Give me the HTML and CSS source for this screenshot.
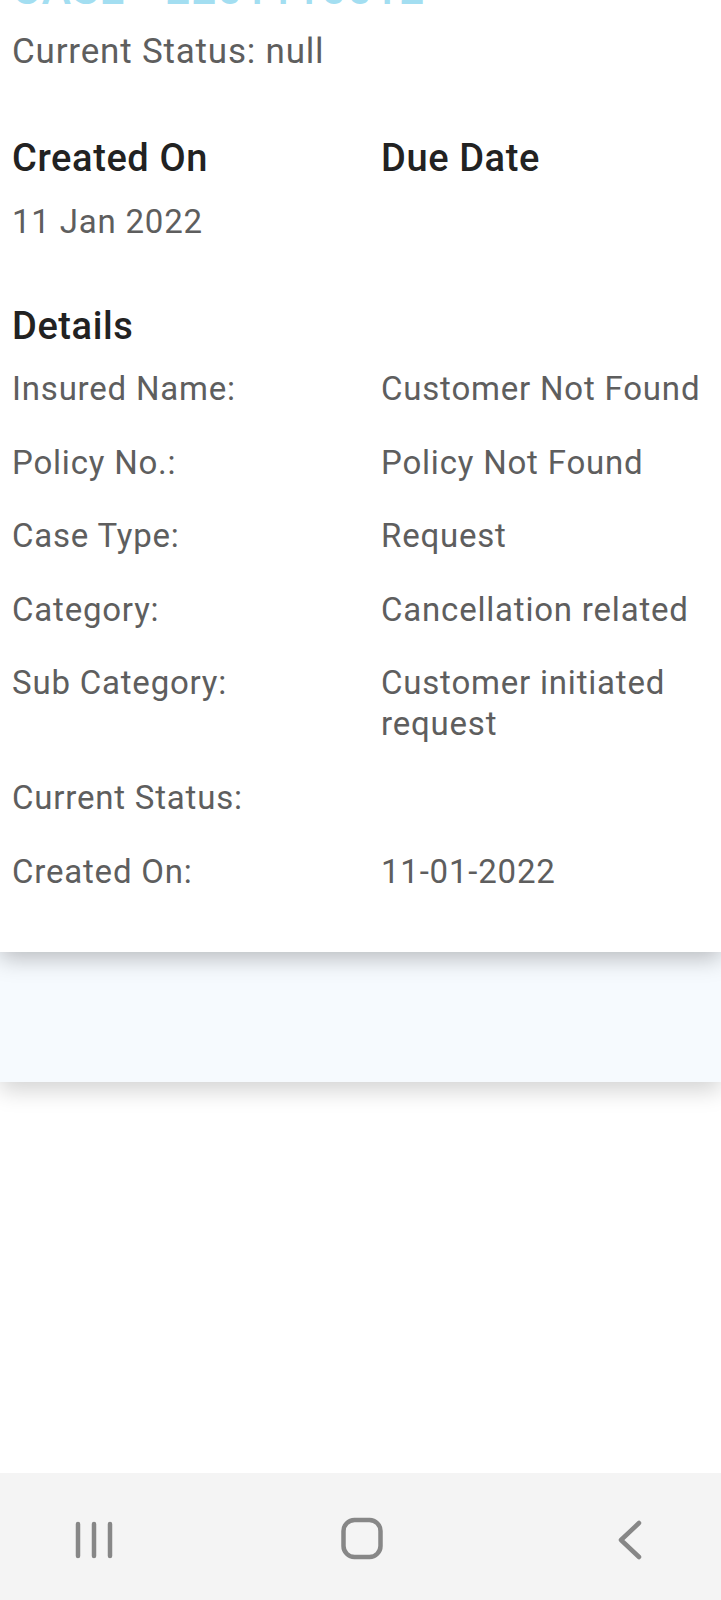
FILE: index.html
```html
<!DOCTYPE html>
<html lang="en">
<head>
  <meta charset="UTF-8" />
  <title>Case Details</title>
  <link rel="stylesheet" href="styles.css">
</head>
<body>
  <div class="screen">
    <div class="case-card">
      <h1 class="case-title">CASE - 2201110012</h1>
      <p class="status-line">Current Status: null</p>

      <!-- dates -->
      <div class="two-col dates-head">
        <h2 class="section-title">Created On</h2>
        <h2 class="section-title">Due Date</h2>
      </div>
      <div class="two-col dates-values">
        <span>11 Jan 2022</span>
        <span></span>
      </div>

      <h2 class="section-title details-title">Details</h2>
      <div class="two-col details-grid">
        <span>Insured Name:</span>
        <span>Customer Not Found</span>
        <span>Policy No.:</span>
        <span>Policy Not Found</span>
        <span>Case Type:</span>
        <span>Request</span>
        <span>Category:</span>
        <span>Cancellation related</span>
        <span>Sub Category:</span>
        <span>Customer initiated request</span>
        <span>Current Status:</span>
        <span></span>
        <span>Created On:</span>
        <span>11-01-2022</span>
      </div>
    </div>

    <div class="action-strip"></div>
    <div class="filler"></div>

    <!-- system navigation bar -->
    <div class="nav-bar">
      <svg class="nav-icon" viewBox="0 0 48 48" width="48" height="48">
        <path d="M8 8V40M24 8V40M40 8V40" fill="none" stroke="#878787" stroke-width="4.5" stroke-linecap="round"/>
      </svg>
      <svg class="nav-icon" viewBox="0 0 48 48" width="48" height="48">
        <rect x="5.5" y="4" width="37" height="37" rx="11" fill="none" stroke="#878787" stroke-width="4.5"/>
      </svg>
      <svg class="nav-icon" viewBox="0 0 48 48" width="48" height="48">
        <path d="M33 7L15 24L33 41" fill="none" stroke="#878787" stroke-width="4.5" stroke-linecap="round" stroke-linejoin="round"/>
      </svg>
    </div>
  </div>
</body>
</html>
```

FILE: styles.css
```css
/* Case details screen */
body {
  margin: 0;
  font-family: Roboto, "Noto Sans", Arial, sans-serif;
  background-color: #fff;
  color: #5e5e5e;
  overflow: hidden;
}
.screen {
  display: flex;
  flex-direction: column;
  min-height: 1600px;
}
.case-card {
  position: relative;
  z-index: 2;
  background-color: #fff;
  padding: 0 8px 60px 12px;
  box-shadow: 0 6px 22px rgba(0, 0, 0, 0.26);
}
.case-title {
  margin: -31px 0 0;
  font-size: 44px;
  line-height: 40px;
  font-weight: 500;
  color: #a3def1;
  letter-spacing: 1px;
}
.status-line {
  margin: 22px 0 0;
  font-size: 35px;
  line-height: 41px;
  letter-spacing: 0.8px;
}
.two-col {
  display: grid;
  grid-template-columns: 369px 1fr;
  font-size: 33px;
  line-height: 41px;
  letter-spacing: 0.8px;
}
.section-title {
  margin: 0;
  font-size: 38px;
  line-height: 44px;
  font-weight: 500;
  color: #222;
  letter-spacing: 0.6px;
}
.dates-head {
  margin-top: 64px;
}
.dates-values {
  margin-top: 21px;
}
.details-title {
  margin-top: 62px;
}
.details-grid {
  margin-top: 20px;
  row-gap: 32.6px;
}
.action-strip {
  position: relative;
  z-index: 1;
  height: 130px;
  background-color: #f6fafe;
  box-shadow: 0 8px 22px rgba(0, 0, 0, 0.18);
}
.filler {
  flex: 1;
}
.nav-bar {
  height: 127px;
  background-color: #f4f4f4;
  display: flex;
  justify-content: space-between;
  align-items: flex-start;
  padding: 43px 67px 0 70px;
  box-sizing: border-box;
}
.nav-icon {
  display: block;
}
```
